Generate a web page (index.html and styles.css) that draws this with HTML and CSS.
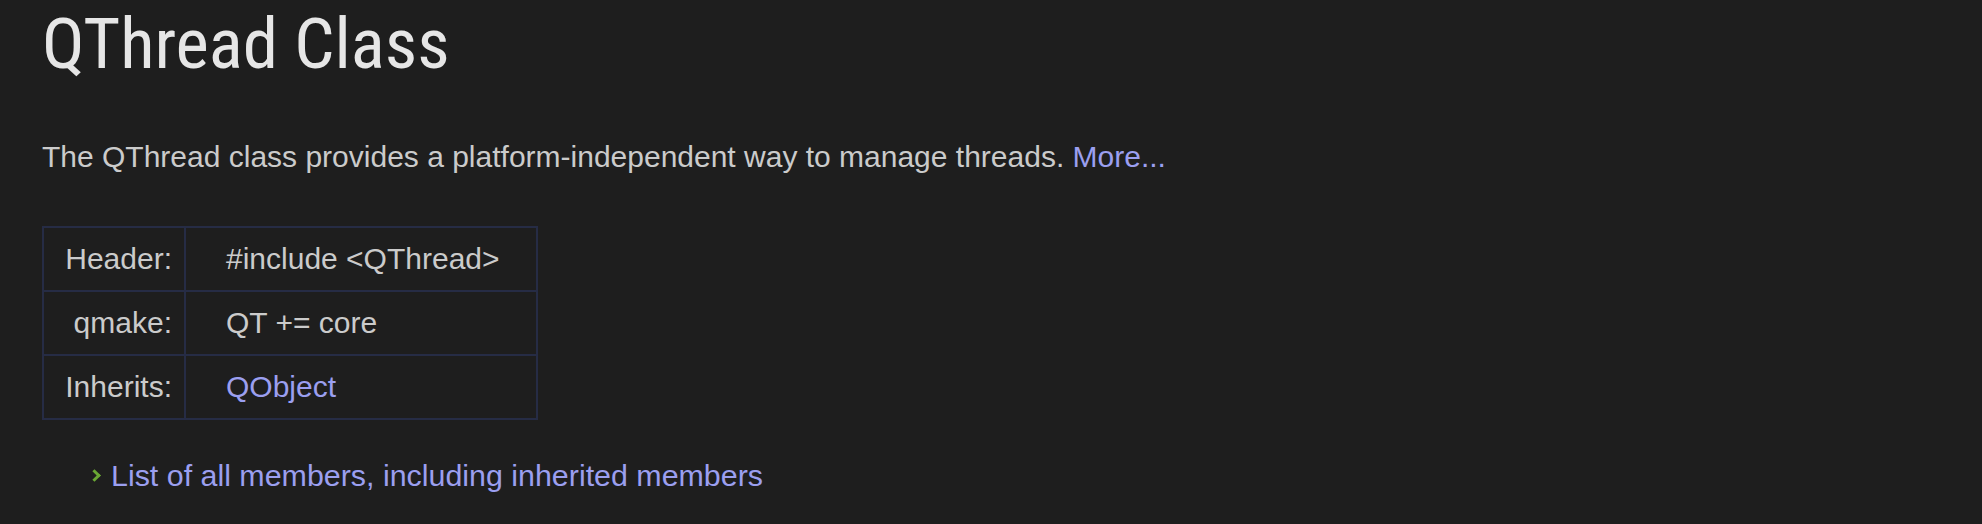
FILE: index.html
```html
<!DOCTYPE html>
<html>
<head>
<meta charset="utf-8">
<link rel="stylesheet" href="styles.css">
</head>
<body>
<div class="page">
  <h1 class="title">QThread Class</h1>
  <p class="brief">The QThread class provides a platform-independent way to manage threads. <a href="#details" class="link">More...</a></p>
  <table class="summary">
    <tr><td class="label">Header:</td><td class="value">#include &lt;QThread&gt;</td></tr>
    <tr><td class="label">qmake:</td><td class="value">QT += core</td></tr>
    <tr><td class="label">Inherits:</td><td class="value"><a href="#" class="link">QObject</a></td></tr>
  </table>
  <ul class="members">
    <li><a href="#" class="link">List of all members, including inherited members</a></li>
  </ul>
</div>
</body>
</html>
```
FILE: styles.css
```css
html, body {
  margin: 0;
  padding: 0;
  background: #1e1e1e;
}
body {
  font-family: "Liberation Sans", Arial, sans-serif;
  color: #cbcbcb;
}
.page {
  padding: 0 0 0 42px;
}
.title {
  margin: 0;
  padding-top: 2px;
  font-family: "Roboto Condensed", "Roboto", sans-serif;
  font-stretch: condensed;
  font-size: 71px;
  font-weight: normal;
  line-height: 84px;
  color: #e6e6e6;
}
.brief {
  margin: 51px 0 0 0;
  font-size: 30px;
  line-height: 40px;
}
.link {
  color: #9b9ff0;
  text-decoration: none;
}
.summary {
  margin-top: 49px;
  border-collapse: collapse;
  table-layout: fixed;
  width: 496px;
  font-size: 30px;
  line-height: 40px;
}
.summary td {
  border: 2px solid #262c45;
  padding: 11px 0;
}
.label {
  width: 128px;
  text-align: right;
  padding-right: 12px !important;
}
.value {
  padding-left: 40px !important;
}
.members {
  list-style: none;
  margin: 35px 0 0 0;
  padding: 0 0 0 48px;
  font-size: 30.4px;
  line-height: 40px;
}
.members li {
  display: flex;
  align-items: center;
  gap: 12px;
}
.members li::before {
  content: "";
  width: 6px;
  height: 6px;
  border-right: 3px solid #6aa834;
  border-top: 3px solid #6aa834;
  transform: rotate(45deg);
}
```
